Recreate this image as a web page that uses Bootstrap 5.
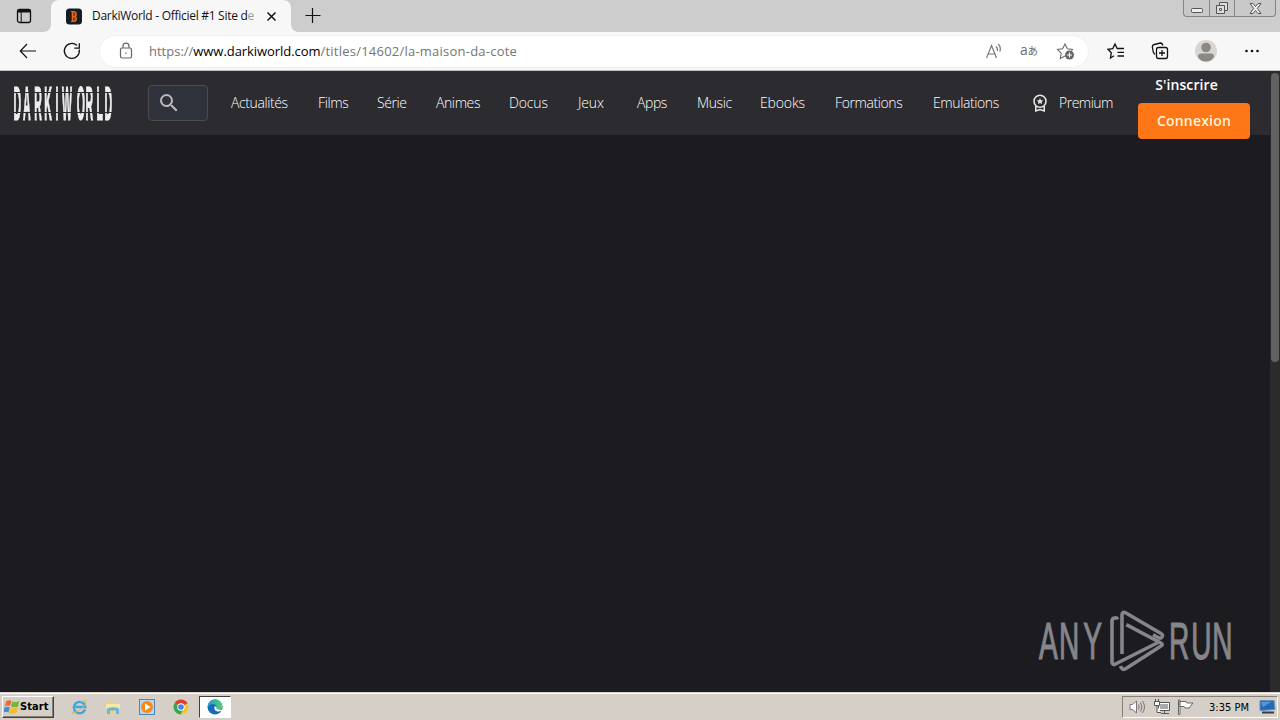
<!DOCTYPE html>
<html lang="fr">
<head>
  <meta charset="UTF-8" />
  <meta name="viewport" content="width=device-width, initial-scale=1.0"/>
  <title>DarkiWorld - Officiel #1 Site de téléchargement</title>
  <link href="https://cdn.jsdelivr.net/npm/bootstrap@5.3.3/dist/css/bootstrap.min.css" rel="stylesheet">
  <style>
    body {
      height: 720px;
      background: #1c1c20;
      font-family: "Open Sans", "Noto Sans", sans-serif;
      line-height: 1;
    }

    svg { display: block; flex-shrink: 0; }

    /* Onglets */
    .tab-strip { height: 32px; background: #cdcdcd; }
    .tab-menu { width: 51px; padding: 8px 0 0 16px; }
    .tab-active {
      position: relative;
      width: 240px;
      background: #f7f7f7;
      border-radius: 8px 8px 0 0;
      padding-left: 15px;
    }
    .tab-active::before,
    .tab-active::after {
      content: "";
      position: absolute;
      bottom: 0;
      width: 7px;
      height: 7px;
    }
    .tab-active::before { left: -7px; background: radial-gradient(circle at 0 0, transparent 6.5px, #f7f7f7 7px); }
    .tab-active::after { right: -7px; background: radial-gradient(circle at 100% 0, transparent 6.5px, #f7f7f7 7px); }
    .tab-title { width: 164px; margin-left: 9px; font-size: 12px; letter-spacing: -.28px; color: #111; }
    .tab-title i { font-style: normal; color: #999; }
    .tab-close { margin-left: 10px; }
    .tab-new { margin-left: 14px; }
    .win-buttons {
      height: 17px;
      width: 93px;
      margin-right: 4px;
      border: 1px solid #858585;
      border-top: 0;
      border-radius: 0 0 4px 4px;
      background: #c9c9c9;
    }
    .win-buttons span { display: flex; justify-content: center; align-items: center; }
    .win-buttons span + span { border-left: 1px solid #858585; }
    .win-min, .win-max { width: 25px; }

    /* Barre d'adresse */
    .tool-bar { height: 39px; background: #f7f7f7; border-bottom: 1px solid #bfc3c3; padding-left: 18px; }
    .address {
      width: 988px;
      height: 31px;
      margin-left: 18px;
      padding: 0 12px 0 19px;
      border-radius: 16px;
      background: #fff;
      box-shadow: 0 0 0 1px #f1f1f1;
    }
    .url { margin-left: 16px; font-size: 13px; color: #757575; }
    .url b { font-weight: 400; color: #000; letter-spacing: -.06px; }
    .url-path { letter-spacing: .23px; }
    .fav-icon { margin-left: 19px; }
    .col-icon { margin-left: 23px; }
    .user-icon { margin-left: 24px; }
    .more-icon { margin-left: 26px; }

    /* En-tête du site */
    .site-header { height: 64px; width: 1270px; background: #2b2b30; padding: 0 20px 0 13px; z-index: 1; }
    .search-box {
      width: 60px;
      height: 36px;
      margin-left: 34px;
      padding-left: 8px;
      border: 1px solid #4b4b51;
      border-radius: 4px;
      background: #30323b;
    }
    .site-links {
      display: grid;
      grid-template-columns: 87px 59px 59px 73px 69px 59px 60px 63px 75px 98px 67px;
      margin-left: 23px;
      font-size: 14px;
      font-weight: 300;
      letter-spacing: -.4px;
    }
    .site-links a, .premium { color: #fff; text-decoration: none; white-space: nowrap; }
    .site-links .loose { letter-spacing: -.15px; }
    .premium { margin-left: 30px; font-size: 14px; font-weight: 300; letter-spacing: -.5px; }
    .premium span { margin-left: 9px; }
    .account { width: 112px; font-size: 14px; font-weight: 600; letter-spacing: .2px; }
    .account a { height: 36px; color: #fff; text-decoration: none; }
    .account .btn-join { padding-right: 15px; letter-spacing: .1px; }
    .account .btn-login { background: #fd7617; border-radius: 4px; color: #fff3d8; }

    .page-view { height: 557px; }
    .scroll-track { width: 10px; height: 621px; margin-top: -64px; padding: 2px 1px; background: #2b2b2b; z-index: 2; }
    .scroll-thumb { height: 289px; border-radius: 4px; background: #626262; }
    .watermark { position: absolute; left: 1036px; top: 607px; }
    .watermark text, .brand-logo text { font-family: "Liberation Sans", sans-serif; }

    /* Barre des tâches */
    .task-bar {
      height: 28px;
      background: #d5cfc7;
      border-top: 1px solid #d5cfc7;
      box-shadow: inset 0 1px #fff;
      padding: 2px 2px 2px 2px;
      font-family: "DejaVu Sans Condensed", "DejaVu Sans", sans-serif;
      font-size: 11px;
      color: #000;
    }
    .start-btn {
      width: 52px;
      height: 22px;
      border: 1px solid;
      border-color: #fff #404040 #404040 #fff;
      box-shadow: inset -1px -1px #858179;
      font-weight: 700;
      padding-left: 1px;
    }
    .start-btn span { letter-spacing: .1px; }
    .quick { gap: 18px; margin-left: 17px; }
    .task-active {
      width: 32px;
      height: 22px;
      margin-left: 10px;
      border: 1px solid;
      border-color: #404040 #fff #fff #404040;
      background: #fff;
    }
    .tray {
      width: 156px;
      height: 22px;
      border: 1px solid;
      border-color: #858179 #fff #fff #858179;
      padding-left: 6px;
    }
    .clock { width: 41px; margin-left: 14px; }
  </style>
</head>
<body class="overflow-hidden">

<!-- Onglets -->
<div class="tab-strip d-flex">
  <div class="tab-menu">
    <svg width="16" height="16" fill="none" stroke="#111"><rect x="1.5" y="1.5" width="13" height="13" rx="2" stroke-width="1.3"/><path d="M1.5 3h13" stroke-width="3"/><path d="M5.2 4v10"/></svg>
  </div>
  <div class="tab-active d-flex align-items-center">
    <svg width="17" height="17"><rect y=".5" width="16" height="16" rx="3.5" fill="#171b22"/><path d="M5.5 3.5h3.500l2 1.500v2.500l-1 1 1 1v3l-2 1.500H5.500z" fill="#8a4017"/><path d="M5 3.500h3.500l1.500 1.500v2.500l-1 1 1 1V12l-1.500 1.500H5M6.500 3.500v10M6 8.500h3" fill="none" stroke="#e66b1e" stroke-width="1.200"/></svg>
    <div class="tab-title text-nowrap py-1">DarkiWorld - Officiel #1 Site d<i>e</i></div>
    <svg class="tab-close" width="11" height="11" stroke="#111" stroke-width="1.500"><path d="M1.500 1.500l8 8m0-8l-8 8"/></svg>
  </div>
  <svg class="tab-new" width="16" height="31" stroke="#111" stroke-width="1.200"><path d="M.5 15.500h15M7.500 8v15"/></svg>
  <div class="win-buttons d-flex ms-auto">
    <span class="win-min"><svg width="14" height="16"><rect x="1.500" y="8.500" width="11" height="4" rx="1" fill="#eee" stroke="#555"/></svg></span>
    <span class="win-max"><svg width="14" height="14" fill="#ddd" stroke="#555"><path d="M4.500 1.500h8v8h-8z"/><path d="M1.500 4.500h8v8h-8z"/><path d="M4.500 7.500h2v2h-2z" fill="#fff"/></svg></span>
    <span class="flex-fill"><svg width="13" height="11"><path d="M1 .5h3l2.500 3 2.500-3h3L8.300 5.500l3.700 5H9l-2.500-3-2.500 3H1l3.700-5z" fill="#eee" stroke="#555"/></svg></span>
  </div>
</div>

<!-- Barre d'adresse -->
<div class="tool-bar d-flex align-items-center">
  <svg width="20" height="20" fill="none" stroke="#111" stroke-width="1.200"><path d="M18 10H2.500M9 3L2.300 10 9 17"/></svg>
  <svg class="ms-4" width="20" height="20" fill="none" stroke="#111" stroke-width="1.300"><path d="M17.200 8.500a7.500 7.500 0 1 1-2.200-4M17.300 2.200v5h-5"/></svg>
  <div class="address d-flex align-items-center">
    <svg width="14" height="18" fill="none" stroke="#666" stroke-width="1.200"><rect x="1.500" y="6" width="11" height="10" rx="1.500"/><path d="M4 6V4.200a3 3 0 0 1 6 0V6"/><circle cx="7" cy="11" r=".8" fill="#666" stroke="none"/></svg>
    <div class="url text-nowrap"><span>https://</span><b>www.darkiworld.com</b><span class="url-path">/titles/14602/la-maison-da-cote</span></div>
    <svg class="ms-auto" width="18" height="18" fill="none" stroke="#777" stroke-width="1.200"><path d="M.5 16L5.500 3.500 10.500 16M2.200 12h6.600M10 4.500q2 1.800 1.200 4.500M12.200 2q3.200 3 1.600 7.500"/></svg>
    <svg class="ms-3 overflow-visible" width="20" height="18" fill="#6d6d6d"><text x="0" y="13" font-family="Open Sans" font-size="14">a</text><text x="7.500" y="12.500" font-family="Noto Sans CJK JP" font-size="10.500">あ</text></svg>
    <svg class="ms-3" width="20" height="20" fill="none" stroke="#6b6b6b" stroke-width="1.100"><path d="M9 15l-4.700 2.400.9-5.200L1.500 8.500l5.100-.7L9 3l2.400 4.800 5.100.7-1 1.200"/><circle cx="13.500" cy="14" r="4.500" fill="#666" stroke="none"/><path d="M11 14h5M13.500 11.500v5" stroke="#fff"/></svg>
  </div>
  <svg class="fav-icon" width="20" height="20" fill="none" stroke="#111" stroke-width="1.300"><path d="M7 14.800L3.500 17l.8-5.300L1 8.300l4.800-.7L8 3l2.200 4.500h6.800M10.500 11.300h6.500M10.500 15h6.500"/></svg>
  <svg class="col-icon" width="20" height="20" fill="none" stroke="#111" stroke-width="1.300"><path d="M5 13.500l-1.700-2.200-1-5.500q0-1.800 2-2.300L10.500 2q1.800 0 2.300 2.500"/><rect x="6.500" y="6.500" width="11" height="11" rx="2"/><path d="M12 9v6M9 12h6"/></svg>
  <svg class="user-icon" width="24" height="24"><circle cx="12" cy="12" r="11" fill="#d8d5d2"/><circle cx="12" cy="8.500" r="4.800" fill="#8c8884"/><path d="M4 18q0-3.500 3-3.500h10q3 0 3 3.500-3 4.500-8 4.500T4 18z" fill="#8c8884"/></svg>
  <svg class="more-icon" width="16" height="4" fill="#111"><circle cx="2.500" cy="2" r="1.300"/><circle cx="8" cy="2" r="1.300"/><circle cx="13.500" cy="2" r="1.300"/></svg>
</div>

<!-- En-tête du site -->
<header class="site-header d-flex align-items-center position-relative">
  <svg class="brand-logo overflow-visible" width="101" height="38" fill="#eee">
    <defs><mask id="cut"><rect width="101" height="38" fill="#fff"/><path d="M0 8.500h101M0 28.500h101" stroke="#000" stroke-width="1"/></mask></defs>
    <g mask="url(#cut)"><text transform="translate(0 36) scale(.22 1)" font-size="48" font-weight="700" stroke="#eee" stroke-width="1.2" x="2 46 97 142 193 223 290 330 379 416">DARKIWORLD</text></g>
  </svg>
  <div class="search-box d-flex align-items-center flex-shrink-0">
    <svg width="24" height="24" viewBox="0 0 24 24" fill="#b9b9bd"><path d="M15.500 14h-.79l-.28-.27A6.471 6.471 0 0 0 16 9.500 6.500 6.500 0 1 0 9.500 16c1.610 0 3.090-.59 4.230-1.570l.27.28v.79l5 4.990L20.490 19l-4.990-5zm-6 0C7.010 14 5 11.990 5 9.500S7.010 5 9.500 5 14 7.010 14 9.500 11.990 14 9.500 14z"/></svg>
  </div>
  <nav class="site-links">
    <a href="#">Actualités</a>
    <a href="#">Films</a>
    <a href="#">Série</a>
    <a href="#">Animes</a>
    <a href="#" class="loose">Docus</a>
    <a href="#" class="loose">Jeux</a>
    <a href="#">Apps</a>
    <a href="#">Music</a>
    <a href="#" class="loose">Ebooks</a>
    <a href="#">Formations</a>
    <a href="#">Emulations</a>
  </nav>
  <a href="#" class="premium d-flex align-items-center">
    <svg width="20" height="20" fill="none" stroke="#e5e5e5" stroke-width="1.600"><circle cx="10" cy="8.300" r="6"/><path d="M5.800 13v5l4.200-1.400 4.200 1.400v-5"/><path d="M10 5l1 2.200 2.300.2-1.700 1.600.5 2.300-2.100-1.200-2.100 1.200.5-2.300-1.700-1.600 2.300-.2z" fill="#e5e5e5" stroke="none"/></svg>
    <span>Premium</span>
  </a>
  <div class="account ms-auto flex-shrink-0">
    <a href="#" class="btn-join d-flex align-items-center justify-content-center">S'inscrire</a>
    <a href="#" class="btn-login d-flex align-items-center justify-content-center">Connexion</a>
  </div>
</header>

<main class="page-view d-flex justify-content-end">
  <div class="scroll-track position-relative"><div class="scroll-thumb"></div></div>
  <svg class="watermark" width="200" height="68" fill="#85858a">
    <g stroke="#85858a" stroke-width="1.200">
      <text transform="translate(3 52) scale(.54 1)" font-size="52" x="0 37 82">ANY</text>
      <text transform="translate(133 52) scale(.54 1)" font-size="52" x="0 41 80">RUN</text>
    </g>
    <g fill="none" stroke="#85858a" stroke-width="3.600" stroke-linejoin="round">
      <path d="M81.500 12.500q-.5-2-3-1.500-2.500.5-2.500 3V55q0 3.500 3.500 2L122 35.500"/>
      <path d="M86 47V8q0-4 4-2l35 20.500q2.500 1.500 1 3.500t-4 .5l-5-2.800"/>
      <path d="M90.300 17.700L125 36q2.500 1.500 0 3L90 61.500q-4 2.500-5.500-2.500"/>
    </g>
  </svg>
</main>

<!-- Barre des tâches -->
<footer class="task-bar d-flex align-items-center">
  <div class="start-btn d-flex align-items-center">
    <svg width="16" height="16"><path d="M2 2.500q3-2 5.500-.5L6 7Q3.500 6 .8 7.500z" fill="#ed6b2b"/><path d="M8.300 2.500q3.500 1.500 7-.5L14 7.500Q10 9 7 7.300z" fill="#77b43c"/><path d="M.6 8.500q2.500-1.500 5.200-.3L4.500 13.500q-2.500-1.500-5.300 0z" fill="#408ecb"/><path d="M6.800 8.500q3.500 1.500 7 0L12.300 14q-3.500 1.500-7 .3z" fill="#f5bd2c"/></svg>
    <span>Start</span>
  </div>
  <div class="quick d-flex">
    <svg width="16" height="16" fill="none"><path d="M14 10.500A5.700 5.700 0 1 1 14.300 8H4.500" stroke="#3fa6df" stroke-width="2.400"/><path d="M3 12q-3 4-1 2.500Q15 9 15 3q0-3-5 0" stroke="#e6b832"/></svg>
    <svg width="16" height="16"><path d="M2 3l5-1 1 2h5v10H2z" fill="#ecd476"/><path d="M1 5h14v5H1z" fill="#f6e8a4"/><path d="M2 15V9.500q6-2.500 12 0V15h-3v-3.500H5V15z" fill="#6bb5d9"/></svg>
    <svg width="16" height="16"><rect x=".5" y=".5" width="15" height="15" fill="#b9d6ed" stroke="#4a86b9"/><circle cx="8" cy="8" r="6" fill="#f58a1d"/><path d="M6 4.500v7L11.500 8z" fill="#fff"/></svg>
    <svg width="16" height="16"><circle cx="8" cy="8" r="7.500" fill="#f5c52a"/><path d="M8 8L1.500 4.300A7.500 7.500 0 0 1 14.500 4.300z" fill="#e23c30"/><path d="M8 8L1.500 4.300A7.500 7.500 0 0 0 7.500 15.500L11 9z" fill="#39a452"/><circle cx="8" cy="8" r="3.700" fill="#fff"/><circle cx="8" cy="8" r="2.800" fill="#4384ee"/></svg>
  </div>
  <div class="task-active d-flex align-items-center justify-content-center">
    <svg width="16" height="16"><defs><linearGradient id="eg"><stop stop-color="#239bdc"/><stop offset="1" stop-color="#55cf64"/></linearGradient></defs><circle cx="8" cy="8" r="7.500" fill="#176bb6"/><path d="M.5 8A7.500 7.500 0 0 1 15.500 7.500q0 3-3.500 3H9.500q1-2-.5-4Q5 3 .5 8z" fill="url(#eg)"/><path d="M7.500 7.500q-1 4 3 5 2 .3 4-.7l1.500-1.300-2 .3q-3 0-4.500-1.300.5-1-.5-2z" fill="#fff"/></svg>
  </div>
  <div class="tray d-flex align-items-center ms-auto">
    <svg width="17" height="16" fill="#fff" stroke="#777"><path d="M1 5.500h2.500L7.500 2v12L3.500 10.500H1z"/><path d="M9.500 5.500q1.500 2.500 0 5M11.500 3.500q3 4.500 0 9M13.500 2q4 6 0 12" fill="none"/></svg>
    <svg class="ms-2" width="16" height="16" fill="#fff" stroke="#555"><path d="M4.500 3.500h11v8h-11z"/><path d="M6 5h8v5H6z" fill="#aaa" stroke="none"/><path d="M.5 2.500h5v4h-5zM1.500 0v2M4.500 0v2M3 7v6.500h4M7 14.500h8M10.500 12v2"/></svg>
    <svg class="ms-2" width="17" height="16" fill="#fff" stroke="#666"><path d="M.5 1v14.500h1.500V1z"/><path d="M2 2.500h6l1 1.500h6l-2.500 3-1 2H7L6 7.500H2z"/></svg>
    <svg class="clock" height="14"><text x="0" y="11" font-size="11" textLength="40" lengthAdjust="spacingAndGlyphs">3:35 PM</text></svg>
    <svg class="ms-2" width="18" height="16"><path d="M2 1.500h14l1 9-15 1z" fill="#2469b8" stroke="#6c8fb1"/><path d="M3 3l11-.5L5 8z" fill="#5298dd"/><path d="M4 13.500h12" stroke="#303c4c" stroke-width="2"/></svg>
  </div>
</footer>

<script src="https://cdn.jsdelivr.net/npm/bootstrap@5.3.3/dist/js/bootstrap.bundle.min.js"></script>
</body>
</html>
